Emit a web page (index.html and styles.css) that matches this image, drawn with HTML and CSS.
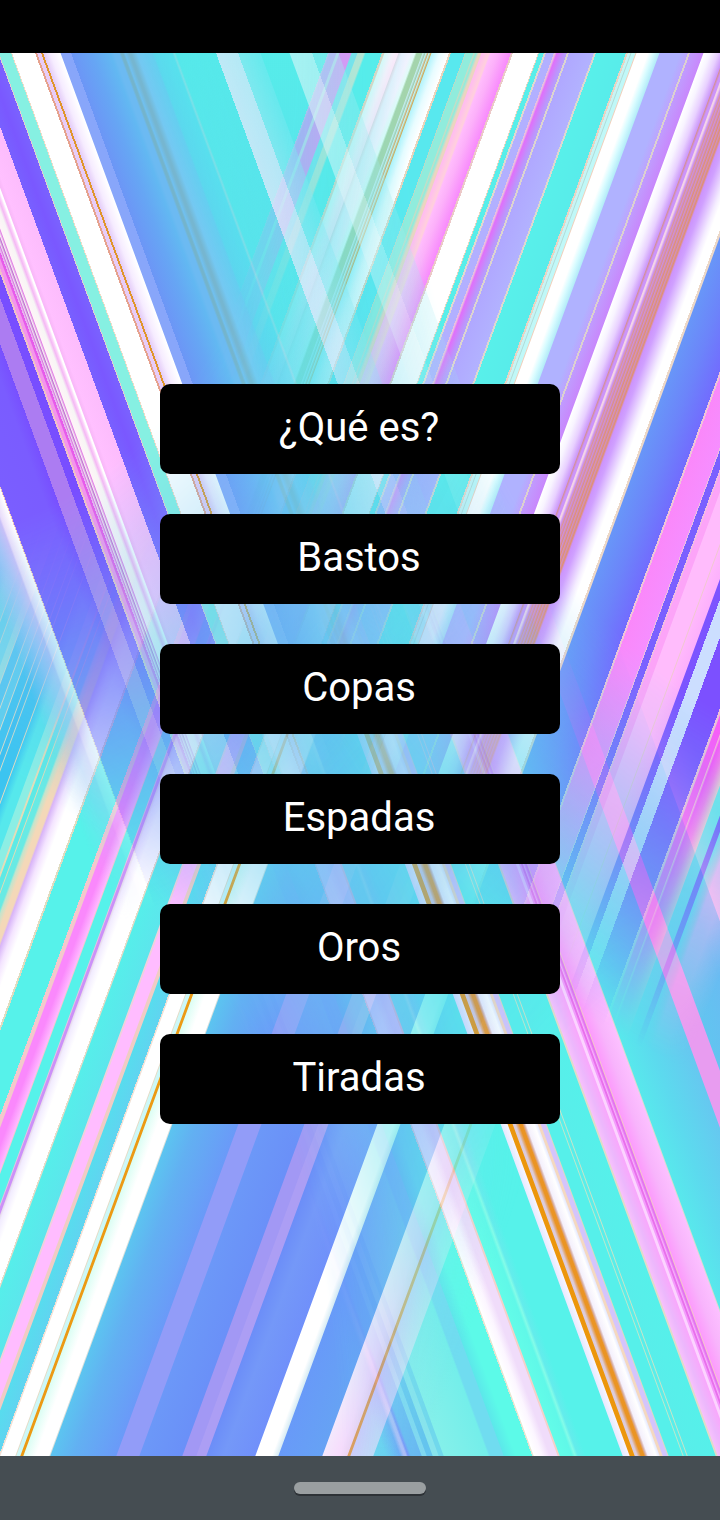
FILE: index.html
```html
<!DOCTYPE html>
<html lang="es">
<head>
<meta charset="utf-8">
<meta name="viewport" content="width=device-width, initial-scale=1">
<title>Tarot</title>
<link rel="stylesheet" href="styles.css">
</head>

<body>
<div class="status-bar"></div>

<main class="screen">
  <div class="wallpaper" aria-hidden="true">
    <div class="beams bottom-right"></div>
    <div class="beams bottom-left"></div>
    <div class="beams top-right"></div>
    <div class="beams top-left"></div>
  </div>

  <nav class="menu">
    <button type="button">¿Qué es?</button>
    <button type="button">Bastos</button>
    <button type="button">Copas</button>
    <button type="button">Espadas</button>
    <button type="button">Oros</button>
    <button type="button">Tiradas</button>
  </nav>
</main>

<div class="nav-bar"><span class="home-pill"></span></div>
</body>
</html>
```
FILE: styles.css
```css
* {
  box-sizing: border-box;
}

body {
  margin: 0;
  min-height: 100vh;
  display: flex;
  flex-direction: column;
  background: #000;
  font-family: Roboto, sans-serif;
}

.status-bar {
  height: 53px;
  background: #000;
}

.screen {
  position: relative;
  flex: 1;
  display: flex;
  align-items: center;
  justify-content: center;
  padding: 40px 20px 41px;
}

.menu {
  position: relative;
  display: flex;
  flex-direction: column;
  gap: 40px;
  width: 400px;
  max-width: 100%;
}

.menu button {
  height: 90px;
  padding: 0 2px 4px 0;
  border: 0;
  border-radius: 10px;
  background: #000;
  color: #fff;
  font-family: inherit;
  font-size: 40px;
  cursor: pointer;
}

.nav-bar {
  height: 64px;
  display: flex;
  align-items: center;
  justify-content: center;
  background: #454d52;
}

.home-pill {
  width: 132px;
  height: 12px;
  border-radius: 6px;
  background: #9a9fa1;
  box-shadow: 0 2px 0 #2d3236;
}

/* wallpaper: four sets of slanted stripes, each fading out to the centre */

.wallpaper {
  position: absolute;
  inset: 0;
  overflow: hidden;
  background: linear-gradient(#56ecea, #5cdcee 18%, #68c4f0 32%, #62c0f0 60%, #64b4f2 76%, #62cef0);
}

.beams {
  position: absolute;
  inset: 0;
}

.beams::before {
  content: "";
  position: absolute;
  top: 0;
  bottom: 0;
  width: 1400px;
  transform-origin: 0 0;
}

.top-left::before,
.bottom-right::before {
  left: -600px;
  transform: skewX(20.2deg);
}

.top-right::before,
.bottom-left::before {
  left: 0;
  transform: skewX(-20.2deg);
}

.top-left {
  -webkit-mask-image: radial-gradient(78% 50% at -14% 0, #000 70%, rgba(0,0,0,.4) 103%, transparent 130%);
  mask-image: radial-gradient(78% 50% at -14% 0, #000 70%, rgba(0,0,0,.4) 103%, transparent 130%);
}

.top-left::before {
  background: linear-gradient(90deg,
    rgba(98,192,240,0) 395px, #a8c4f6 418px, #c8c0f8 428px, #e8dcfa 430px, #fff 440px,
    #f0c8c0 440px 441px,
    #7a5eff 441px, #7a5cff 480px, #7850ff 493px,
    #ac7cf2 493px 510px,
    #784eff 510px 519px,
    #f0c0c8 519px 521px, #f494ec 521px 524px, #e65cea 525px 527px, #e8b4f0 527px 528px,
    #d878e0 529px, #f0e0f0 530px, #c070d0 532px, #f8f0f4 533px, #e084e4 535px,
    #fff4f8 536px, #f6f6f4 542px, #f4b8f4 545px, #fcd0fa 547px, #fff 549px, #fff 550px,
    #f8b8f8 551px, #ffc0ff 555px, #fcbcfc 573px,
    #7860ff 573px, #7a58ff 585px, #7a62ff 598px,
    #e0d0d0 598px 599px,
    #86f0e2 599px 611px,
    #f0dcc8 611px 612px,
    #fff 612px 635px,
    #e6a28e 635px 637px, #e8ccf8 637px 641px,
    #e0962c 641px 643px,
    #e4ccf8 643px, #f6ecff 650px, #fff 660px,
    #88a6fa 661px 671px,
    #6c96f6 671px, #66a6f4 692px, #62b8f2 710px,
    #6cbaf2 714px 719px, #74b4cc 721px 723px, #70c0f0 725px, #76b6d0 729px 731px,
    #74c8f2 737px, rgba(102,204,240,.9) 752px, rgba(92,212,238,.8) 754px, rgba(88,220,238,.7) 772px,
    rgba(140,220,230,.7) 774px, rgba(86,230,234,.6) 776px, rgba(86,230,234,.5) 816px,
    rgba(226,232,250,.75) 816px, rgba(220,232,250,.7) 838px,
    rgba(150,232,242,.6) 838px, rgba(120,232,240,.5) 860px,
    rgba(86,236,232,.1) 861px 889px,
    rgba(210,244,246,.65) 890px 912px, rgba(160,236,240,.45) 912px 938px, transparent 939px);
}

.top-right {
  -webkit-mask-image: radial-gradient(86% 63% at 125% 0, #000 80%, rgba(0,0,0,.5) 99%, transparent 120%);
  mask-image: radial-gradient(86% 63% at 125% 0, #000 80%, rgba(0,0,0,.5) 99%, transparent 120%);
}

.top-right::before {
  background: linear-gradient(90deg,
    transparent 328px,
    #e0b0ec 328px, #e884fa 330px 336px, #e8c8ec 337px 339px, #fc80f8 340px 351px,
    #80e0ec 352px 357px, #c8e4d0 358px 364px,
    #56ecea 366px 382px,
    #e4d4c0 382px 384px,
    #e0fafa 385px, #fdf0fc 393px, #ffe8fa 398px, #e0dce8 399px, #e4f0fc 402px, #f0f2fe 410px, #e0fcf8 415px,
    #a4d4ac 417px 422px, #c4ecec 423px, #a0ccb0 425px, #c0f4f8 426px, #d0ac70 428px,
    #bcf6fa 429px, #d0a858 431px, #b4f4fc 432px, #e8fcff 440px, #fff 449px,
    #e8d4bc 449px 451px,
    #58e8ee 451px 465px,
    #b8dcc8 465px 466px, #90ecdc 466px 473px, #c8dcc4 474px, #90ecdc 476px, #ecd4c0 479px 481px,
    #ffbcf0 482px, #ffd0dc 489px, #ffbcfc 491px, #fcb0fa 498px, #f88afc 511px,
    #ecc8c8 511px 513px,
    #fff 513px 538px,
    #e8d8c4 538px 539px,
    #58eeea 539px 544px,
    #e0d8d0 544px 546px, #b2b0ff 546px 554px, #e8c0e0 554px 555px,
    #e070fa 557px, #c090fc 563px, #b4a0fc 567px,
    #dcd4d0 567px 569px,
    #b0a8ff 569px, #b2b2ff 594px,
    #dcd8d0 594px 596px,
    #58f0ea 596px, #58ecea 626px,
    #e8d4c4 626px 628px, #c8f4f4 628px 630px, #b0dcd8 631px, #c0f8f8 632px 635px, #f0d0bc 636px,
    #fff 637px 648px, #d8fcff 653px, #b4ecf8 659px,
    #b0b2ff 660px 680px, #bca4fe 688px,
    #dcd0d0 688px 690px,
    #c09cfe 690px, #c888fc 703px,
    #fff 704px, #f8f4ff 710px, #e8d0ff 718px, #cc98fa 725px,
    #d49098 726px, #cc94fa 728px 730px, #f4d4e8 731px 732px, #cc94f4 734px,
    #dc9494 736px, #cc90e0 737px, #dc9090 739px, #cc90e0 740px, #dc9080 742px, #cc90d8 743px,
    #e09070 745px, #d090c8 746px, #e09070 748px, #d090c0 749px, #e09070 751px,
    #cc94fc 753px, #d0a0ff 758px, #f4ecff 771px, #fff 776px 785px,
    #ecd8c8 785px 787px,
    #6896f8 788px, #6c84fa 812px, #726cfe 837px,
    #f0c4d8 837px 839px,
    #fa88fa 839px, #f68eff 865px,
    #ecc0e0 865px 866px,
    #7a60ff 866px 873px,
    #f0c0e0 873px 874px,
    #fca4f8 875px 881px, #ffbcfc 882px 900px, #f0c8d0 901px, #ffb8fc 902px, #fcb0fc 913px,
    #7c54ff 914px 921px,
    #ccdeff 921px 935px,
    #7c50ff 935px 961px,
    #f0c0d8 961px 963px, #ff58f8 964px 970px, #ffb8d8 971px, #ff50fa 973px, #ff74ec 980px, #f4d0d0 989px,
    #70ecea 990px 1000px, #7454fc 1001px 1006px, #70ecec 1007px, #b8d0e8 1014px,
    #fcbcf4 1018px 1032px, rgba(98,192,240,0) 1060px);
}

.bottom-left {
  -webkit-mask-image: radial-gradient(86% 62% at -25% 100%, #000 84%, rgba(0,0,0,.5) 100%, transparent 120%);
  mask-image: radial-gradient(86% 62% at -25% 100%, #000 84%, rgba(0,0,0,.5) 100%, transparent 120%);
}

.bottom-left::before {
  background: linear-gradient(90deg,
    transparent 190px,
    #88e4e8 200px 208px, #e4e0cc 209px, #70dcea 210px 216px, #e4e0cc 217px, #80e0ea 218px 225px,
    #a8e8e0 226px 231px, #e0e0cc 232px, #58c8f0 233px 240px, #e4e0cc 241px, #60d0ee 242px 248px,
    #e4e0cc 249px, #40c4f0 250px 257px, #e0dcc8 258px, #3cc0f0 259px 263px, #d8dcc8 264px,
    #3cc4f0 265px 275px, #e4dcc0 276px, #40ccf0 277px, #56e8ec 285px 293px,
    #8ceee4 294px 301px, #e4dcb8 302px 303px, #5ceae6 304px 308px, #dcdcb8 309px,
    #68eae4 310px 315px, #c4e4cc 317px, #f4d8b8 322px 327px,
    #d8b4f8 329px, #f4e4ff 336px, #fff 344px 358px,
    #e0dcc0 358px 360px,
    #56f2ea 360px 391px,
    #f4c8cc 391px 395px, #fa88fc 396px 402px, #ffb8ff 411px, #f0c8d0 412px,
    #56f2ea 413px 423px,
    #e0c8e0 424px, #cc90f8 425px 427px, #e8dcec 428px,
    #f2ecff 430px, #fff 438px 453px,
    #e8dcc8 453px 454px,
    #56eeea 455px, #5ce6ec 480px,
    #f0d0dc 481px 482px, #ffbcff 483px 495px, #f0ccc4 496px 499px,
    #58dcee 500px, #60d4f0 515px,
    #f0e0d4 515px 516px,
    #fff 517px 531px,
    #e4dcc8 532px, #ccf8f8 533px 536px,
    #ec9a14 537px 539px,
    #dcfef4 540px, #fff 552px 565px,
    #d8e0dc 566px,
    #5cc4f0 567px, #62b0f2 590px, #6a9af8 632px,
    #929cf8 633px 655px,
    #6c98f8 656px, #6a90f8 698px,
    #a298f4 699px 712px, #ac9ef4 713px 722px,
    #6c8ef8 723px, #7498f8 740px, #7090fa 771px,
    #fff 772px 788px, #d8ecf4 794px,
    #689af8 795px, #66a2f4 838px,
    #f4e8fc 839px, #f6dcfc 855px, #f0d4f4 863px,
    rgba(238,150,70,.9) 864px 866px,
    rgba(222,204,252,.9) 867px, rgba(236,224,250,.8) 889px,
    rgba(130,224,240,.4) 890px, transparent 940px);
}

.bottom-right {
  -webkit-mask-image: radial-gradient(80% 55% at 114% 100%, #000 70%, rgba(0,0,0,.6) 100%, transparent 140%);
  mask-image: radial-gradient(80% 55% at 114% 100%, #000 70%, rgba(0,0,0,.6) 100%, transparent 140%);
}

.bottom-right::before {
  background: linear-gradient(90deg,
    transparent 470px,
    rgba(112,140,250,.6) 484px, rgba(200,180,250,.8) 488px 490px, #7890fa 492px, #68b8f2 495px 505px,
    #80d8f0 506px 510px, #64c4ee 511px 516px, #88e4ec 517px 522px, #70d8ec 523px 527px,
    #84f0ea 528px, #74eeea 572px,
    #70dcf0 574px 587px, #5ce8ea 588px, #5cfae8 600px 616px,
    #e4e4d0 616px 617px,
    #fff 618px, #fcf6ff 626px, #f0dcfa 634px 641px,
    #f4d0c8 642px 643px,
    #62fce8 644px, #60f8e8 656px, #84fce8 659px, #64ecec 662px, #56f2ea 670px 706px,
    #e8eaff 707px, #f6f4ff 713px,
    #ec960c 714px 718px,
    #dcccdc 719px 721px, #e0ac80 723px, #ea9424 725px 728px, #d8b0a8 730px,
    #f4f0fc 732px, #fff 740px, #e8ecff 743px,
    #f4d8c0 744px 746px, #d4c4fc 747px 751px,
    #d8dcc0 752px,
    #56f0ea 753px 766px, #bce8cc 767px, #58eeea 768px 770px, #c8e4c8 771px, #58eeea 772px, #56f0ea 799px,
    #e0dcc8 800px 801px,
    #f6c0fc 802px, #ecb8fc 808px, #f8a8fc 817px,
    #fcd4ff 818px 820px, #f49cfc 821px 822px, #e870ec 823px 824px, #f8b0fc 825px, #e474f0 827px 828px,
    #f4c8c8 829px,
    #fc9cfc 830px, #f8b4fc 842px, #fcc0ff 856px,
    #d8dcd0 857px,
    #58e8ec 858px, #5cdaee 885px, #66c8f0 924px,
    #e89cf0 925px 945px,
    #62c4f0 946px, #68bcf2 980px, #7cb8f4 1000px,
    #e8c0f0 1001px, rgba(250,200,250,.5) 1020px, transparent 1040px);
}
```
